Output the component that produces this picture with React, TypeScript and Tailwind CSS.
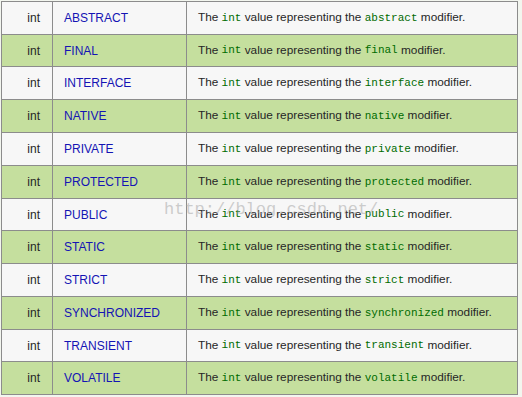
import React from 'react';

type Row = { name: string; word: string; green: boolean; h: string };

const rows: Row[] = [
  { name: 'ABSTRACT', word: 'abstract', green: false, h: 'h-[33px]' },
  { name: 'FINAL', word: 'final', green: true, h: 'h-[32px]' },
  { name: 'INTERFACE', word: 'interface', green: false, h: 'h-[33px]' },
  { name: 'NATIVE', word: 'native', green: true, h: 'h-[33px]' },
  { name: 'PRIVATE', word: 'private', green: false, h: 'h-[33px]' },
  { name: 'PROTECTED', word: 'protected', green: true, h: 'h-[33px]' },
  { name: 'PUBLIC', word: 'public', green: false, h: 'h-[32px]' },
  { name: 'STATIC', word: 'static', green: true, h: 'h-[33px]' },
  { name: 'STRICT', word: 'strict', green: false, h: 'h-[33px]' },
  { name: 'SYNCHRONIZED', word: 'synchronized', green: true, h: 'h-[33px]' },
  { name: 'TRANSIENT', word: 'transient', green: false, h: 'h-[32px]' },
  { name: 'VOLATILE', word: 'volatile', green: true, h: 'h-[33px]' },
];

const Code: React.FC<{ children: React.ReactNode }> = ({ children }) => (
  <code className="font-['Liberation_Mono',monospace] text-[11px] text-[#006b00]">{children}</code>
);

const App: React.FC = () => {
  return (
    <div className="relative min-h-screen bg-[#f3f6ef] pt-px pl-px font-['Liberation_Sans',Arial,sans-serif] text-[12px] text-[#262626]">
      <div className="w-[517px] border-l border-t border-[#8c8c8c]">
        {rows.map((r) => (
          <div
            key={r.name}
            className={`flex ${r.h} border-b border-[#8c8c8c] ${r.green ? 'bg-[#c5df9e]' : 'bg-[#f7f7f7]'}`}
          >
            <div className="flex w-[51px] items-center justify-end border-r border-[#8c8c8c] pr-[12px]">int</div>
            <div className="flex w-[134px] items-center border-r border-[#8c8c8c] pl-[11px] text-[#1414b4]">{r.name}</div>
            <div className="flex w-[331px] items-center whitespace-pre border-r border-[#8c8c8c] pl-[11px] text-[11.8px]">
              The <Code>int</Code> value representing the <Code>{r.word}</Code> modifier.
            </div>
          </div>
        ))}
      </div>
      {/* watermark */}
      <div className="pointer-events-none absolute left-[164px] top-[197px] font-['Liberation_Mono',monospace] text-[17px] text-[#a0a0a0]/50">
        http://blog.csdn.net/
      </div>
    </div>
  );
};

export default App;
